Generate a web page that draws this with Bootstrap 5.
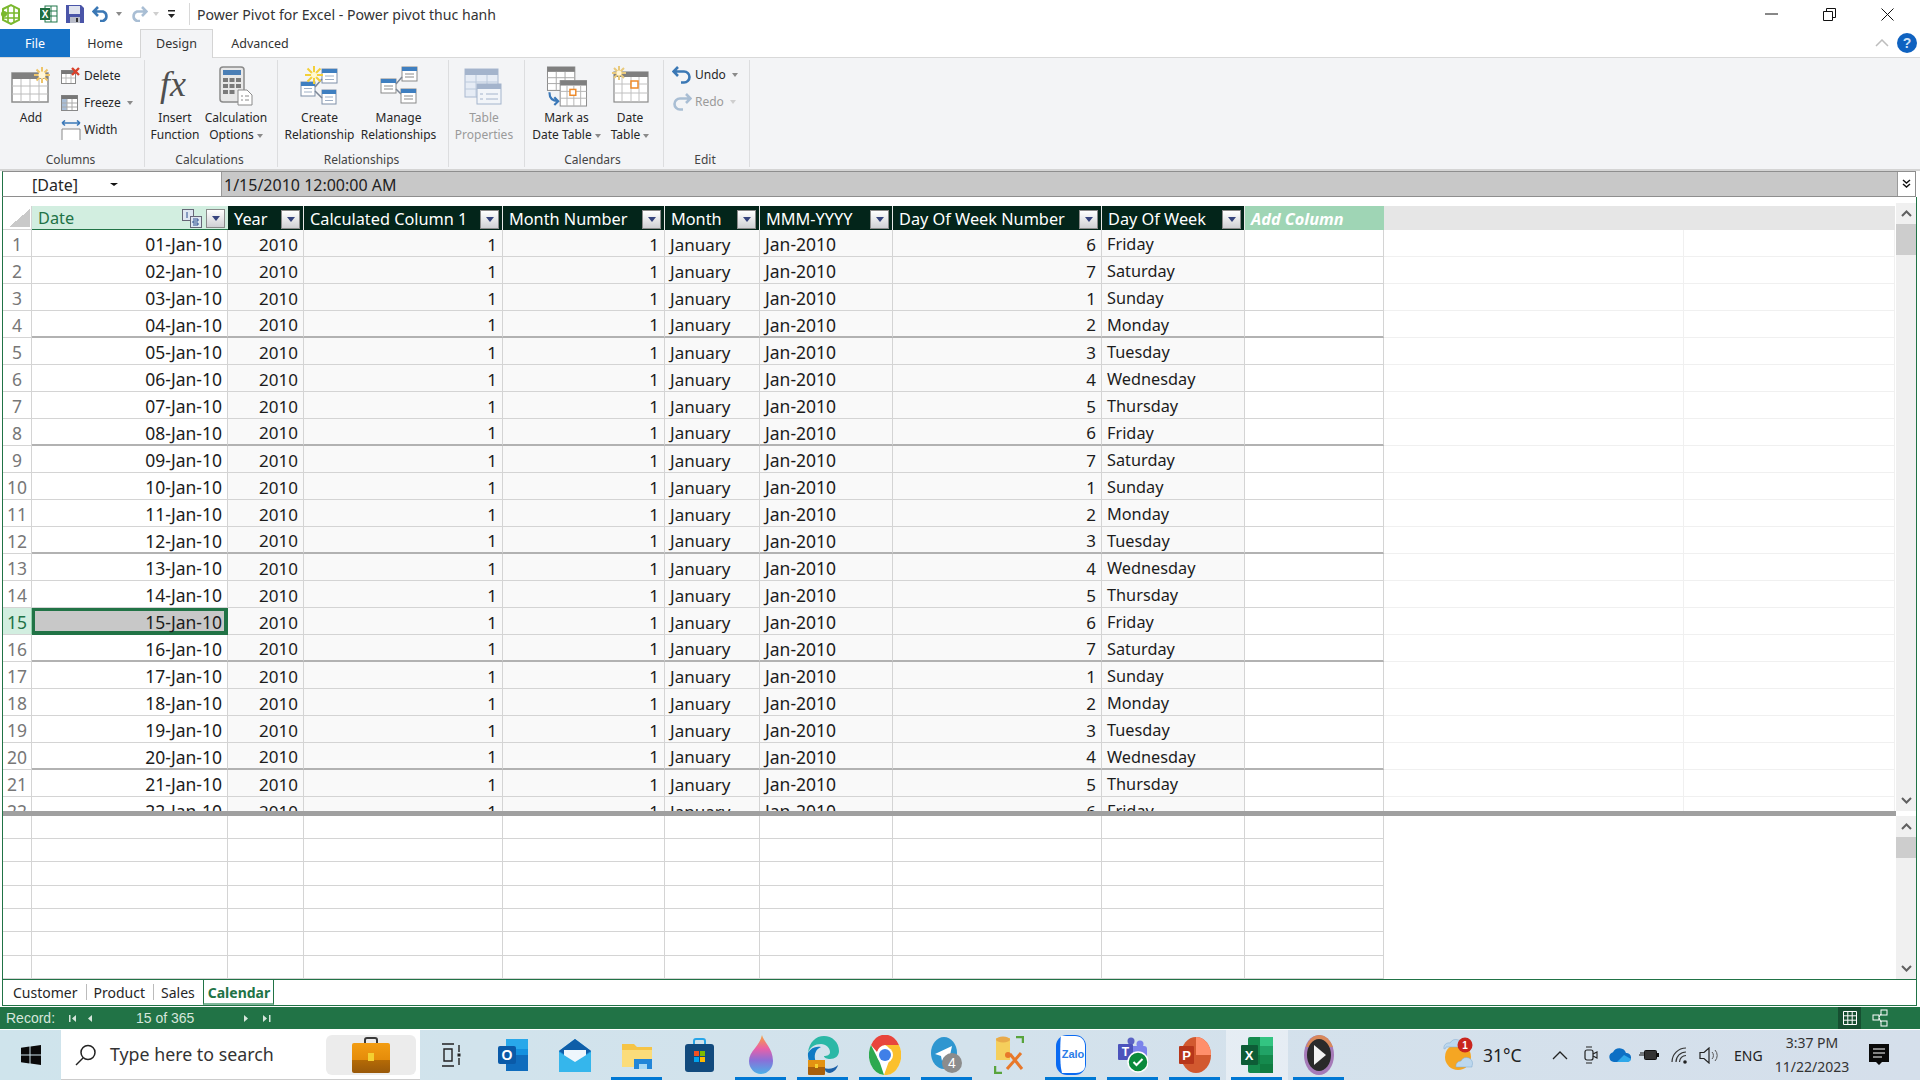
<!DOCTYPE html>
<html lang="en">
<head>
  <meta charset="UTF-8">
  <title>Power Pivot for Excel - Power pivot thuc hanh</title>
  <link href="https://cdn.jsdelivr.net/npm/bootstrap@5.3.3/dist/css/bootstrap.min.css" rel="stylesheet">
  <style>
    body { width: 1920px; height: 1080px; overflow: hidden; background: #fff; font-family: "Noto Sans", "Open Sans", sans-serif; font-size: 12px; color: #262626; }
    svg { display: block; flex: none; }

    /* title bar */
    .title-bar { height: 29px; }
    .title-bar .title { font-size: 14.1px; color: #333; border-left: 1px solid #d8d8d8; padding-left: 7px; padding-top: 2px; line-height: 20px; }
    .qat { width: 189px; padding-left: 0; }
    .win-btn { width: 58px; display: flex; justify-content: center; }

    /* tabs */
    .rb-tabs { height: 28px; border-bottom: 0; }
    .rb-tabs .nav-link { height: 28px; padding: 0; border: 1px solid transparent; border-bottom: 0; border-radius: 0; color: #333; font-size: 12.5px; line-height: 28px; text-align: center; }
    .rb-tabs .nav-link.file { width: 70px; background: #1572c8; color: #fff; }
    .rb-tabs .nav-link.home { width: 70px; }
    .rb-tabs .nav-link.active { width: 73px; background: #f3f4f6; border-color: #d4d4d4; position: relative; z-index: 1; height: 29px; }
    .rb-tabs .nav-link.adv { width: 94px; }

    /* ribbon */
    .ribbon { height: 115px; background: #f3f4f6; border-top: 1px solid #d9d9d9; border-bottom: 2px solid #d4d4d4; }
    .rb-group { border-right: 1px solid #dcdddf; margin-top: 2px; margin-bottom: 2px; height: 107px; }
    .rb-body { height: 90px; padding-top: 6px; }
    .rb-label { height: 17px; line-height: 19px; text-align: center; color: #444; padding-right: 3px; }
    .rb-btn { display: flex; flex-direction: column; align-items: center; line-height: 17px; text-align: center; white-space: nowrap; }
    .rb-btn .ic { height: 41px; display: flex; align-items: flex-start; justify-content: center; margin-bottom: 2px; }
    .rb-btn.off, .rb-small.off { color: #9a9a9a; }
    .rb-small { display: flex; align-items: center; height: 27px; gap: 3px; white-space: nowrap; }
    .car { display: inline-block; width: 0; height: 0; border: 3.5px solid transparent; border-top: 4px solid #8a8a8a; border-bottom: 0; vertical-align: middle; margin-left: 3px; }
    .car.off { border-top-color: #cfcfcf; }

    /* formula bar */
    .formula { height: 26px; margin-left: 2px; margin-right: 4px; border: 1px solid #8e8e8e; border-left-color: #217346; background: #c8c8c8; font-size: 16px; }
    .formula .name { width: 219px; height: 100%; background: #fff; border-right: 1px solid #9a9a9a; padding-left: 29px; padding-top: 1px; gap: 29px; }
    .formula .value { padding-left: 2px; padding-top: 1px; color: #222; }
    .formula .more { width: 18px; height: 100%; background: #fff; border-left: 1px solid #9a9a9a; }

    /* data panes */
    .panes { margin-left: 2px; margin-right: 3px; border-left: 1px solid #217346; border-right: 1px solid #217346; }
    .pane { overflow: hidden; }
    .pane-top { height: 614px; padding-top: 9px; }
    .pane-bottom { height: 163px; }
    .splitter { height: 5px; background: #a0a0a0; margin-right: 20px; }
    .vscroll { width: 20px; margin-left: 1px; background: #f0f0f0; display: flex; flex-direction: column; flex: none; }
    .pane-top .vscroll { margin-top: -3px; }
    .sb-arrow { height: 21px; display: flex; align-items: center; justify-content: center; flex: none; }
    .sb-thumb { background: #cdcdcd; flex: none; }

    .table.pp-grid { table-layout: fixed; width: 1892px; margin: 0; border-collapse: separate; border-spacing: 0; font-size: 17px; --bs-table-bg: transparent; }
    .table.pp-grid th, .table.pp-grid td { padding: 3px 5px 0; height: 27px; line-height: 23px; font-weight: 400; white-space: nowrap; overflow: hidden; border: 0; border-right: 1px solid #d4d4d4; border-bottom: 1px solid #d4d4d4; background-color: #f9f9f9; color: #1c1c1c; box-shadow: none; }
    .table.pp-grid td.wide { font-size: 17.5px; }
    .table.pp-grid td.day { font-size: 16.3px; }
    .table.pp-grid th { height: 24px; padding: 0 3px 0 6px; line-height: 21px; font-size: 16.3px; background-color: #03251a; color: #fff; border-right-color: #e8e8e8; border-bottom: 0; }
    .table.pp-grid th.corner { background: #fff linear-gradient(to bottom right, transparent 50%, #c9c9c9 50%) no-repeat 6px 3px / 21px 18px; border-right-color: #d4d4d4; border-bottom: 1px solid #d4d4d4; }
    .table.pp-grid th.cur { background-color: #d2eee0; color: #217346; border-bottom: 1px solid #217346; border-right: 0; }
    .table.pp-grid th.addcol { background-color: #9fd5b5; font-weight: 700; font-style: italic; border-right: 0; }
    .table.pp-grid th.fill { background-color: #e6e6e6; border-right-color: #e6e6e6; }
    .table.pp-grid td.rn { background-color: #fff; color: #777; text-align: center; padding-left: 0; padding-right: 0; font-size: 17.5px; }
    .table.pp-grid td.rn.sel { background-color: #d2eee0; color: #217346; border-right-color: #8fcfaa; }
    .table.pp-grid td.dt { background-color: #fff; text-align: right; font-size: 17.5px; }
    .table.pp-grid td.num { text-align: right; }
    .table.pp-grid td.blank { background-color: #fff; }
    .table.pp-grid td.fill { background-color: #fff; border-right-color: #f0f0f0; border-bottom-color: #f0f0f0; }
    .table.pp-grid td.hv { border-bottom: 2px solid #b2b2b2; line-height: 22px; }
    .table.pp-grid td.cursor { background-color: #c8c8c8; box-shadow: inset 0 0 0 3px #217346; border-color: #217346; }
    .table.pp-grid.low td { height: 23px; padding: 0; line-height: 21px; background-color: #fff; }
    .table.pp-grid.low tr:nth-child(3n) td { height: 24px; }
    .table.pp-grid.low td.none { border: 0; }
    .flt { width: 19px; height: 19px; border: 1px solid #8a8a8a; background: linear-gradient(#fff, #cfd0d4); display: flex; align-items: center; justify-content: center; flex: none; }
    .flt i { width: 0; height: 0; border: 4px solid transparent; border-top: 5px solid #36447e; border-bottom: 0; }

    /* sheet tabs */
    .sheets { height: 27px; margin-left: 2px; margin-right: 3px; border: 1px solid #217346; border-top: 0; border-bottom: 1px solid #217346; font-size: 14px; }
    .sheets .line { flex: 1; border-top: 1px solid #217346; height: 100%; }
    .sheets .nav-link { padding: 0 8px; height: 100%; line-height: 25px; border: 0; border-top: 1px solid #217346; color: #262626; border-radius: 0; position: relative; }
    .sheets .nav-link + .nav-link::before { content: ""; position: absolute; left: 0; top: 4px; height: 16px; border-left: 1px solid #bbb; }
    .sheets .nav-link.active { color: #217346; font-weight: 700; border: 1px solid #217346; border-bottom: 2px solid #7fb89a; padding: 0 4px; width: 71px; text-align: center; }
    .sheets .nav-link.active::before { display: none; }
    .sheets .lead { width: 2px; height: 100%; border-top: 1px solid #217346; }

    /* status bar */
    .status { height: 22px; margin-top: 1px; background: #217346; color: #d6e6dc; font-size: 14px; padding-left: 6px; font-family: "Liberation Sans", sans-serif; }
    .status .gv { width: 23px; height: 22px; background: #164f31; }

    /* taskbar */
    .taskbar { height: 51px; background: linear-gradient(90deg, #cfe4ec, #d3e2ec 50%, #d5dfeb); border-top: 1px solid #fff; }
    .start { width: 61px; }
    .search { width: 359px; height: 100%; background: #fff; border-bottom: 1px solid #ccc; padding-left: 14px; font-size: 17.8px; color: #333; }
    .search .brief { width: 90px; height: 40px; margin-left: auto; margin-right: 4px; border-radius: 6px; background: #ececec; }
    .tb-item { width: 62px; height: 100%; display: flex; align-items: center; justify-content: center; position: relative; }
    .tb-item.on::after { content: ""; position: absolute; left: 5px; right: 6px; bottom: 0; height: 3px; background: #0078d4; }
    .tb-item.cur { background: rgba(255,255,255,.42); }
    .tray { margin-left: auto; width: 480px; color: #222; }
    .clock { font-size: 14px; line-height: 24px; text-align: center; width: 110px; color: #333; }
  </style>
</head>
<body class="d-flex flex-column">

<!-- title bar -->
<div class="title-bar d-flex align-items-center">
  <div class="qat d-flex align-items-center">
    <svg width="22" height="22" viewBox="0 0 22 22" class="me-3"><path d="M3 6l8-4 8 4v11l-8 4-8-4z" fill="#fff" stroke="#7ab82e" stroke-width="2"/><path d="M8 4v16M14 4v16M3 10h16M3 15h16" stroke="#7ab82e" stroke-width="1.6"/><circle cx="4" cy="11" r="3" fill="#7ab82e"/></svg>
    <svg width="18" height="18" viewBox="0 0 18 18" style="margin-left:2px"><rect x="5" y="1" width="12" height="16" fill="#fff" stroke="#21764a"/><path d="M11 1v16M5 6h12M5 11h12" stroke="#21764a"/><rect y="3" width="10" height="12" fill="#1e6d40"/><text x="5" y="13" font-size="10" font-weight="700" text-anchor="middle" fill="#fff" font-family="Liberation Sans">X</text></svg>
    <svg width="18" height="18" viewBox="0 0 18 18" class="ms-2"><path d="M0 0h15l3 3v15H0z" fill="#4a55a8"/><rect x="3" y="1" width="11" height="8" fill="#dfe3ee"/><rect x="4" y="12" width="10" height="6" fill="#b8bcc8"/><rect x="10" y="13" width="2" height="4" fill="#333"/></svg>
    <svg width="19" height="16" viewBox="0 0 19 16" class="ms-2"><path d="M6 1L1.500 5.500 6 10M2 5.500h9a5 5 0 0 1 0 9.500H8" fill="none" stroke="#3b78b5" stroke-width="2.600"/></svg>
    <i class="car" style="margin-left:5px"></i>
    <svg width="19" height="16" viewBox="0 0 19 16" style="margin-left:7px"><path d="M13 1l4.500 4.500L13 10M17 5.500H8a5 5 0 0 0 0 9.500h3" fill="none" stroke="#a9bed4" stroke-width="2.600"/></svg>
    <i class="car off" style="margin-left:5px"></i>
    <svg width="7" height="9" viewBox="0 0 7 9" style="margin-left:9px"><path d="M0 0h7v1.500H0zM0 4h7L3.500 8z" fill="#222"/></svg>
  </div>
  <div class="title">Power Pivot for Excel - Power pivot thuc hanh</div>
  <div class="ms-auto d-flex align-items-center" style="padding-right:4px">
    <div class="win-btn"><svg width="13" height="2" viewBox="0 0 13 2"><path d="M0 1h13" stroke="#111" stroke-width="1"/></svg></div>
    <div class="win-btn"><svg width="13" height="13" viewBox="0 0 13 13"><path d="M.5 3.500h9v9h-9zM3.500 3V.5h9v9H10" fill="none" stroke="#111"/></svg></div>
    <div class="win-btn"><svg width="13" height="13" viewBox="0 0 13 13"><path d="M.5.500l12 12M12.500.500l-12 12" stroke="#111"/></svg></div>
  </div>
</div>

<!-- ribbon tabs -->
<div class="d-flex align-items-center">
  <ul class="nav rb-tabs flex-grow-1">
    <li class="nav-item"><a class="nav-link file" href="#">File</a></li>
    <li class="nav-item"><a class="nav-link home" href="#">Home</a></li>
    <li class="nav-item"><a class="nav-link active" href="#">Design</a></li>
    <li class="nav-item"><a class="nav-link adv" href="#">Advanced</a></li>
  </ul>
  <svg width="14" height="8" viewBox="0 0 14 8" class="me-2"><path d="M1 7l6-6 6 6" fill="none" stroke="#bdbdbd" stroke-width="1.500"/></svg>
  <svg width="20" height="20" viewBox="0 0 20 20" style="margin-right:3px"><circle cx="10" cy="10" r="10" fill="#0f62c0"/><text x="10" y="15" font-size="14" font-weight="700" text-anchor="middle" fill="#cfe2f8" font-family="Liberation Sans">?</text></svg>
</div>

<!-- ribbon -->
<div class="ribbon d-flex">
  <div class="rb-group" style="width:145px">
    <div class="rb-body d-flex">
      <div class="rb-btn" style="width:62px">
        <div class="ic"><svg width="40" height="40" viewBox="0 0 40 40"><rect x="1" y="7" width="36" height="29" fill="#fff" stroke="#8c8c8c" stroke-width="1.500"/><rect x="1" y="7" width="36" height="6" fill="#808080"/><path d="M10 13v23M19 13v23M28 13v23M1 20h36M1 28h36" stroke="#bcbcbc"/><g stroke="#eec468" stroke-width="2"><path d="M31 1v16M23 9h16M25.500 3.500l11 11M36.500 3.500l-11 11"/></g><circle cx="31" cy="9" r="3.500" fill="#fff6d8"/></svg></div>
        <span>Add</span>
      </div>
      <div style="margin-top:-3px;margin-left:-1px">
        <div class="rb-small"><svg width="20" height="18" viewBox="0 0 20 18"><rect x=".5" y="3.500" width="14" height="13" fill="#fff" stroke="#888"/><rect x=".5" y="3.500" width="14" height="3.500" fill="#777"/><path d="M5 7v9M10 7v9M1 11h13" stroke="#bbb"/><path d="M11 1l7 7M18 1l-7 7" stroke="#d8402a" stroke-width="2.400"/></svg>Delete</div>
        <div class="rb-small"><svg width="20" height="18" viewBox="0 0 20 18"><rect x=".5" y="1.500" width="16" height="15" fill="#fff" stroke="#888"/><rect x=".5" y="1.500" width="16" height="3.500" fill="#777"/><rect x="1" y="5" width="5" height="11" fill="#a8bdd6"/><path d="M6 5v11M11 5v11M1 9h15M1 13h15" stroke="#aaa"/></svg>Freeze<i class="car"></i></div>
        <div class="rb-small"><svg width="20" height="20" viewBox="0 0 20 20"><path d="M1 3h18M1 3l3-2.500M1 3l3 2.500M19 3l-3-2.500M19 3l-3 2.500" stroke="#3a78b8" stroke-width="1.600" fill="none"/><path d="M1 20V9h18v11" fill="#fff" stroke="#8a8a8a"/></svg>Width</div>
      </div>
    </div>
    <div class="rb-label">Columns</div>
  </div>

  <div class="rb-group" style="width:133px">
    <div class="rb-body d-flex">
      <div class="rb-btn" style="width:60px">
        <div class="ic"><svg width="36" height="41" viewBox="0 0 36 41"><text x="3" y="30" font-family="Liberation Serif" font-style="italic" font-size="36" fill="#4f4f4f">fx</text></svg></div>
        <span>Insert<br>Function</span>
      </div>
      <div class="rb-btn" style="width:62px">
        <div class="ic"><svg width="34" height="40" viewBox="0 0 34 40"><rect x="1" y="1" width="24" height="35" rx="3" fill="#e8e8e8" stroke="#8a8a8a" stroke-width="1.500"/><rect x="4" y="4" width="18" height="5" fill="#4a7eb5"/><g fill="#7a7a7a"><rect x="4" y="12" width="5" height="4"/><rect x="10.500" y="12" width="5" height="4"/><rect x="17" y="12" width="5" height="4"/><rect x="4" y="18" width="5" height="4"/><rect x="10.500" y="18" width="5" height="4"/><rect x="17" y="18" width="5" height="4"/><rect x="4" y="24" width="5" height="4"/><rect x="10.500" y="24" width="5" height="4"/></g><path d="M19 24h9l5 5v10H19z" fill="#fff" stroke="#8a8a8a"/><path d="M22 30h2M26 30h4M22 34h2M26 34h4" stroke="#8a8a8a"/></svg></div>
        <span>Calculation<br>Options<i class="car"></i></span>
      </div>
    </div>
    <div class="rb-label">Calculations</div>
  </div>

  <div class="rb-group" style="width:171px">
    <div class="rb-body d-flex">
      <div class="rb-btn" style="width:83px">
        <div class="ic"><svg width="40" height="40" viewBox="0 0 40 40"><g fill="#fff" stroke="#7f8fa8"><rect x="1" y="16" width="14" height="14"/><rect x="22" y="3" width="15" height="14"/><rect x="22" y="24" width="14" height="14"/></g><g fill="#3f7fc0"><rect x="1" y="16" width="14" height="4"/><rect x="22" y="3" width="15" height="4"/><rect x="22" y="24" width="14" height="4"/></g><path d="M15 21l7-8M15 25l7 7" stroke="#7c8797" stroke-width="1.500"/><path d="M4 22.500h8M4 26h8M25 10h9M25 13.500h9M25 31h8M25 34.500h8" stroke="#9fb0c6"/><g stroke="#f3cf38" stroke-width="2"><path d="M14 0v18M5 9h18M7.500 2.500l13 13M20.500 2.500l-13 13"/></g><circle cx="14" cy="9" r="3" fill="#fff8cc"/></svg></div>
        <span>Create<br>Relationship</span>
      </div>
      <div class="rb-btn" style="width:75px">
        <div class="ic"><svg width="38" height="40" viewBox="0 0 38 40"><g fill="#fff" stroke="#8a8a8a"><rect x="1" y="13" width="15" height="14"/><rect x="22" y="1" width="15" height="14"/><rect x="21" y="23" width="15" height="14"/></g><g fill="#3f7fc0"><rect x="1" y="13" width="15" height="4"/><rect x="22" y="1" width="15" height="4"/><rect x="21" y="23" width="15" height="4"/></g><path d="M16 18l6-7M16 23l5 5" stroke="#7c8797" stroke-width="1.500"/><path d="M4 20h9M4 23h9M25 8h9M25 11h9M24 30h9M24 33h9" stroke="#8a8a8a"/></svg></div>
        <span>Manage<br>Relationships</span>
      </div>
    </div>
    <div class="rb-label">Relationships</div>
  </div>

  <div class="rb-group" style="width:76px">
    <div class="rb-body d-flex">
      <div class="rb-btn off" style="width:70px">
        <div class="ic"><svg width="40" height="40" viewBox="0 0 40 40"><rect x="1" y="3" width="33" height="28" fill="#e6ecf5" stroke="#a9b8cf"/><rect x="1" y="3" width="33" height="6" fill="#a4b4cc"/><path d="M12 9v22M23 9v22M1 16h33M1 23h33" stroke="#bccadc"/><rect x="13" y="18" width="24" height="20" fill="#f2f5f9" stroke="#a4b4cc"/><rect x="13" y="18" width="24" height="5" fill="#a4b4cc"/><path d="M22 28h12M22 33h12M16 28h3M16 33h3" stroke="#a4b4cc"/></svg></div>
        <span>Table<br>Properties</span>
      </div>
    </div>
    <div class="rb-label">&nbsp;</div>
  </div>

  <div class="rb-group" style="width:139px">
    <div class="rb-body d-flex">
      <div class="rb-btn" style="width:83px">
        <div class="ic"><svg width="42" height="41" viewBox="0 0 42 42"><rect x="1" y="1" width="28" height="24" fill="#fff" stroke="#8a8a8a"/><rect x="1" y="1" width="28" height="5" fill="#7f7f7f"/><path d="M10 6v19M19 6v19M1 12h28M1 18h28" stroke="#aaa"/><rect x="14" y="15" width="27" height="26" fill="#fff" stroke="#8a8a8a"/><rect x="14" y="15" width="27" height="5" fill="#7f7f7f"/><path d="M21 20v21M28 20v21M35 20v21M14 26h27M14 33h27" stroke="#b5b5b5"/><rect x="24" y="24" width="6" height="6" fill="#fff" stroke="#ee8a2a" stroke-width="1.500"/><path d="M3 27c0 6 3 9 9 9M8 32l4 4-4 4" fill="none" stroke="#3a78b8" stroke-width="2.200"/></svg></div>
        <span>Mark as<br>Date Table<i class="car"></i></span>
      </div>
      <div class="rb-btn" style="width:44px">
        <div class="ic"><svg width="38" height="38" viewBox="0 0 38 38"><rect x="3" y="6" width="34" height="30" fill="#fff" stroke="#8a8a8a" stroke-width="1.200"/><rect x="3" y="6" width="34" height="5" fill="#7f7f7f"/><path d="M11 11v25M20 11v25M28 11v25M3 18h34M3 27h34" stroke="#c0c0c0"/><rect x="20" y="15" width="7" height="7" fill="#fff" stroke="#ee8a2a" stroke-width="1.500"/><g stroke="#e8c97c" stroke-width="2"><path d="M8 0v14M1 7h14M3 2l10 10M13 2L3 12"/></g><circle cx="8" cy="7" r="2.500" fill="#fff6d8"/></svg></div>
        <span>Date<br>Table<i class="car"></i></span>
      </div>
    </div>
    <div class="rb-label">Calendars</div>
  </div>

  <div class="rb-group" style="width:86px">
    <div class="rb-body" style="padding-left:8px;padding-top:2px">
      <div class="rb-small" style="height:27px"><svg width="20" height="18" viewBox="0 0 20 18"><path d="M6 1L1.500 5.500 6 10M2 5.500h10a5 5 0 0 1 0 11h-3" fill="none" stroke="#3b78b5" stroke-width="2.600"/></svg>Undo<i class="car"></i></div>
      <div class="rb-small off" style="height:27px"><svg width="20" height="18" viewBox="0 0 20 18"><path d="M14 1l4.500 4.500L14 10M18 5.500H8a5 5 0 0 0 0 11h3" fill="none" stroke="#a9bed4" stroke-width="2.600"/></svg>Redo<i class="car off"></i></div>
    </div>
    <div class="rb-label">Edit</div>
  </div>
</div>

<!-- formula bar -->
<div class="formula d-flex align-items-center">
  <div class="name d-flex align-items-center"><span>[Date]</span><i class="car" style="border-top-color:#111;border-width:3.500px 4px 0"></i></div>
  <div class="value flex-grow-1">1/15/2010 12:00:00 AM</div>
  <div class="more d-flex align-items-center justify-content-center"><svg width="9" height="10" viewBox="0 0 9 10"><path d="M1 1l3.500 3L8 1M1 5l3.500 3L8 5" fill="none" stroke="#111" stroke-width="1.500"/></svg></div>
</div>

<!-- data panes -->
<div class="panes">
  <div class="pane pane-top d-flex">
    <div class="flex-grow-1 overflow-hidden">
      <table class="table pp-grid" id="top-grid">
        <colgroup><col style="width:29px"><col style="width:196px"><col style="width:76px"><col style="width:199px"><col style="width:162px"><col style="width:95px"><col style="width:133px"><col style="width:209px"><col style="width:143px"><col style="width:139px"><col style="width:300px"><col style="width:211px"></colgroup>
        <thead id="top-head"></thead>
        <tbody id="top-rows"></tbody>
      </table>
    </div>
    <div class="vscroll">
      <div class="sb-arrow"><svg width="11" height="7" viewBox="0 0 11 7"><path d="M1 6l4.500-4.500L10 6" fill="none" stroke="#606060" stroke-width="2"/></svg></div>
      <div class="sb-thumb" style="height:31px"></div>
      <div class="flex-grow-1"></div>
      <div class="sb-arrow"><svg width="11" height="7" viewBox="0 0 11 7"><path d="M1 1l4.500 4.500L10 1" fill="none" stroke="#606060" stroke-width="2"/></svg></div>
    </div>
  </div>
  <div class="splitter"></div>
  <div class="pane pane-bottom d-flex">
    <div class="flex-grow-1 overflow-hidden">
      <table class="table pp-grid low">
        <colgroup><col style="width:29px"><col style="width:196px"><col style="width:76px"><col style="width:199px"><col style="width:162px"><col style="width:95px"><col style="width:133px"><col style="width:209px"><col style="width:143px"><col style="width:139px"><col style="width:300px"><col style="width:211px"></colgroup>
        <tbody id="low-rows"></tbody>
      </table>
    </div>
    <div class="vscroll">
      <div class="sb-arrow"><svg width="11" height="7" viewBox="0 0 11 7"><path d="M1 6l4.500-4.500L10 6" fill="none" stroke="#606060" stroke-width="2"/></svg></div>
      <div class="sb-thumb" style="height:21px"></div>
      <div class="flex-grow-1"></div>
      <div class="sb-arrow"><svg width="11" height="7" viewBox="0 0 11 7"><path d="M1 1l4.500 4.500L10 1" fill="none" stroke="#606060" stroke-width="2"/></svg></div>
    </div>
  </div>
</div>

<!-- sheet tabs -->
<ul class="sheets nav flex-nowrap">
  <li class="lead"></li>
  <li class="nav-item d-flex"><a class="nav-link" href="#">Customer</a><a class="nav-link" href="#">Product</a><a class="nav-link" href="#">Sales</a><a class="nav-link active" href="#">Calendar</a></li>
  <li class="line"></li>
</ul>

<!-- status bar -->
<div class="status d-flex align-items-center">
  <span style="width:63px">Record:</span>
  <svg width="8" height="7" viewBox="0 0 8 7"><path d="M0 0h1.500v7H0zM7 0v7L3 3.500z" fill="#d6e6dc"/></svg>
  <svg width="5" height="7" viewBox="0 0 5 7" style="margin-left:11px"><path d="M4 0v7L0 3.500z" fill="#d6e6dc"/></svg>
  <span style="width:108px;margin-left:43px">15 of 365</span>
  <svg width="5" height="7" viewBox="0 0 5 7" style="margin-left:0"><path d="M0 0v7l4-3.500z" fill="#d6e6dc"/></svg>
  <svg width="8" height="7" viewBox="0 0 8 7" style="margin-left:14px"><path d="M0 0v7l4-3.500zM6 0h1.500v7H6z" fill="#d6e6dc"/></svg>
  <div class="ms-auto gv d-flex align-items-center justify-content-center"><svg width="14" height="14" viewBox="0 0 14 14"><path d="M.5.500h13v13H.5zM.5 4.800h13M.5 9.200h13M4.800.500v13M9.200.500v13" fill="none" stroke="#fff"/></svg></div>
  <div class="d-flex align-items-center justify-content-center" style="width:38px;margin-right:21px"><svg width="16" height="18" viewBox="0 0 16 18"><g fill="none" stroke="#fff"><rect x="1" y="6" width="6" height="5"/><rect x="9" y="1" width="6" height="5"/><rect x="9" y="12" width="6" height="5"/></g><path d="M7 8l2-3M7 9l2 4" stroke="#fff"/></svg></div>
</div>

<!-- windows taskbar -->
<div class="taskbar d-flex align-items-center">
  <div class="start d-flex align-items-center justify-content-center"><svg width="20" height="20" viewBox="0 0 20 20"><path d="M0 2.800l8.500-1.200v8H0zM9.500 1.400L20 0v9.600H9.500zM0 10.500h8.500v8L0 17.300zM9.500 10.500H20V20L9.500 18.600z" fill="#0a0a0a"/></svg></div>
  <div class="search d-flex align-items-center">
    <svg width="22" height="22" viewBox="0 0 22 22"><circle cx="13" cy="8.500" r="7" fill="none" stroke="#222" stroke-width="1.500"/><path d="M8 14l-7 7" stroke="#222" stroke-width="1.500"/></svg>
    <span style="margin-left:13px">Type here to search</span>
    <div class="brief d-flex align-items-center justify-content-center"><svg width="38" height="36" viewBox="0 0 38 36"><defs><linearGradient id="bc" x1="0" y1="0" x2="0" y2="1"><stop offset="0" stop-color="#f39d12"/><stop offset=".55" stop-color="#e58c0a"/><stop offset=".56" stop-color="#b56b06"/><stop offset="1" stop-color="#99590a"/></linearGradient></defs><path d="M13 7V3a2 2 0 0 1 2-2h8a2 2 0 0 1 2 2v4" fill="none" stroke="#3a3a3a" stroke-width="2"/><rect y="6" width="38" height="30" rx="2" fill="url(#bc)"/><rect x="16" y="16" width="6" height="8" fill="#f4cf30"/></svg></div>
  </div>
  <div class="tb-item"><svg width="20" height="24" viewBox="0 0 20 24"><path d="M1 1h12M1 23h12M3 6h8v12H3zM18 2v7M18 15v7" fill="none" stroke="#222" stroke-width="1.400"/><rect x="16.500" y="10.500" width="3" height="3" fill="#222"/></svg></div>
  <div class="tb-item"><svg width="30" height="34" viewBox="0 0 30 34"><rect x="8" y="1" width="22" height="32" rx="2" fill="#1490df"/><path d="M8 1h22v10H8z" fill="#28a8ea"/><path d="M8 17h22v16H8z" fill="#0f6cbd"/><rect y="8" width="18" height="18" rx="2" fill="#0a5aa8"/><text x="9" y="22" font-size="14" font-weight="700" text-anchor="middle" fill="#fff" font-family="Liberation Sans">O</text></svg></div>
  <div class="tb-item"><svg width="32" height="34" viewBox="0 0 32 34"><path d="M0 13L16 1l16 12v19a2 2 0 0 1-2 2H2a2 2 0 0 1-2-2z" fill="#1f8fd9"/><path d="M0 13L16 1l16 12-16 10z" fill="#0f5ea8"/><path d="M5 12h22v6l-11 7-11-7z" fill="#eef6fc"/><path d="M0 14l16 10 16-10v20H0z" fill="#35b6ec"/></svg></div>
  <div class="tb-item on"><svg width="30" height="28" viewBox="0 0 30 28"><path d="M0 3h12l3 3h15v20H0z" fill="#f6c445"/><path d="M0 9h30v17H0z" fill="#fbdc7a"/><path d="M12 28V18h18v10z" fill="#2386d8"/><path d="M17 28v-5h8v5z" fill="#a8d8f4"/></svg></div>
  <div class="tb-item"><svg width="29" height="34" viewBox="0 0 29 34"><path d="M9 6V3a2 2 0 0 1 2-2h7a2 2 0 0 1 2 2v3" fill="none" stroke="#27a5e8" stroke-width="2"/><rect y="6" width="29" height="28" rx="3" fill="#124a7d"/><rect x="9" y="13" width="5" height="5" fill="#f25022"/><rect x="15" y="13" width="5" height="5" fill="#7fba00"/><rect x="9" y="19" width="5" height="5" fill="#00a4ef"/><rect x="15" y="19" width="5" height="5" fill="#ffb900"/></svg></div>
  <div class="tb-item on"><svg width="24" height="40" viewBox="0 0 24 40"><defs><linearGradient id="pa" x1="0" y1="0" x2="0" y2="1"><stop offset="0" stop-color="#f7a43a"/><stop offset=".35" stop-color="#e860a8"/><stop offset=".65" stop-color="#8a70d8"/><stop offset="1" stop-color="#4ab0e8"/></linearGradient></defs><path d="M13 0c1 6 11 13 11 26a12 13 0 0 1-24 0C0 16 11 11 13 0z" fill="url(#pa)"/></svg></div>
  <div class="tb-item on"><svg width="32" height="40" viewBox="0 0 32 40"><path d="M1 18C2 7 9 1 17 1c8 0 15 6 15 15 0 5-4 8-9 8-3 0-6-1-6-3 3 0 6-1 6-4 0-4-4-8-9-8C8 9 3 12 1 18z" fill="#2bb8a6"/><path d="M1 18c3-5 7-7 13-6-5 2-7 7-6 12 1 6 5 11 11 13C9 38 0 29 1 18z" fill="#0e7ac4"/><path d="M23 38c4-1 7-4 8-8-3 3-9 5-14 3 1 3 3 5 6 5z" fill="#1b60a8"/><rect x="1" y="25" width="17" height="15" rx="1" fill="#a85f0c"/><rect x="1" y="25" width="17" height="7" fill="#e39212"/><rect x="8" y="29" width="3" height="4" fill="#f4cf30"/></svg></div>
  <div class="tb-item on"><svg width="32" height="40" viewBox="-16 -20 32 40"><ellipse rx="16" ry="20" fill="#fff"/><path d="M-14 -10A16 20 0 0 1 14 -10H0A10 10 0 0 0 -8 -3z" fill="#e8453c"/><path d="M-14 -10L-5 8 -1 20A16 20 0 0 1 -14 -10z" fill="#2da94f"/><path d="M14 -10H0C6 -8 7 2 4 6L-1 20A16 20 0 0 0 14 -10z" fill="#fbc02d"/><circle r="8" fill="#fff"/><circle r="6" fill="#3f7fe8"/></svg></div>
  <div class="tb-item on"><svg width="32" height="38" viewBox="0 0 32 38"><ellipse cx="13" cy="17" rx="13" ry="16" fill="#2e96d0"/><path d="M4 18l17-8-3 14-5-3-2 4-1-5z" fill="#fff"/><circle cx="21" cy="27" r="10" fill="#8c8c8c"/><text x="21" y="32" font-size="14" text-anchor="middle" fill="#fff" font-family="Liberation Sans">4</text></svg></div>
  <div class="tb-item"><svg width="30" height="38" viewBox="0 0 30 38"><rect x="2" y="2" width="14" height="22" fill="#f5cf5c"/><ellipse cx="9" cy="3.500" rx="7" ry="3" fill="#e8aa4a"/><path d="M22 1h7v6M1 30v7h7" fill="none" stroke="#58a43c" stroke-width="2.500"/><path d="M13 33l14-16M16 18l12 15" stroke="#e8782a" stroke-width="3"/><circle cx="14" cy="19" r="3" fill="#e8782a"/></svg></div>
  <div class="tb-item on"><svg width="30" height="40" viewBox="0 0 30 40"><rect width="30" height="40" rx="11" fill="#0a6af2"/><path d="M5 1h14c6 0 10 4 10 10v20c0 4-4 7-9 7H6l-1-5c-1-6-1-28 0-32z" fill="#fff"/><text x="17" y="23" font-size="11" font-weight="700" text-anchor="middle" fill="#2a7ce8" font-family="Liberation Sans">Zalo</text></svg></div>
  <div class="tb-item on"><svg width="30" height="36" viewBox="0 0 30 36"><circle cx="22" cy="7" r="3.500" fill="#7b83eb"/><circle cx="13" cy="4" r="3.500" fill="#5b63c4"/><rect x="11" y="9" width="18" height="18" rx="3" fill="#7b83eb"/><rect y="7" width="15" height="16" rx="1" fill="#4b53bc"/><text x="7.500" y="19" font-size="12" font-weight="700" text-anchor="middle" fill="#fff" font-family="Liberation Sans">T</text><circle cx="20" cy="25" r="10" fill="#0a8a3c" stroke="#fff" stroke-width="1.500"/><path d="M15.500 25l3 3 6-6" fill="none" stroke="#fff" stroke-width="2"/></svg></div>
  <div class="tb-item on"><svg width="32" height="36" viewBox="0 0 32 36"><ellipse cx="17" cy="18" rx="15" ry="18" fill="#d2592f"/><path d="M17 0a15 18 0 0 1 15 18H17z" fill="#ff8f6b"/><rect y="9" width="15" height="18" rx="1" fill="#b7361a"/><text x="7.500" y="23" font-size="13" font-weight="700" text-anchor="middle" fill="#fff" font-family="Liberation Sans">P</text></svg></div>
  <div class="tb-item on cur"><svg width="32" height="36" viewBox="0 0 32 36"><rect x="7" width="25" height="36" rx="2" fill="#158a4d"/><rect x="19" width="13" height="9" fill="#33c481"/><rect x="19" y="9" width="13" height="9" fill="#21a366"/><rect x="7" y="18" width="12" height="9" fill="#107c41"/><rect x="19" y="27" width="13" height="9" fill="#107c41"/><rect y="8" width="17" height="20" rx="1" fill="#0d5c36"/><text x="8" y="23" font-size="13" font-weight="700" text-anchor="middle" fill="#fff" font-family="Liberation Sans">X</text></svg></div>
  <div class="tb-item on"><svg width="30" height="40" viewBox="0 0 30 40"><ellipse cx="15" cy="20" rx="15" ry="20" fill="#a57ab8"/><path d="M15 0a15 20 0 0 1 14 12L2 12A15 20 0 0 1 15 0z" fill="#d8885a"/><ellipse cx="15" cy="20" rx="12" ry="16" fill="#2a2a2a"/><path d="M10 10l12 10-12 10z" fill="#f2f2f2"/></svg></div>

  <div class="tray d-flex align-items-center">
    <svg width="30" height="36" viewBox="0 0 30 36" style="margin-left:3px"><circle cx="15" cy="20" r="13" fill="#f5a623"/><path d="M1 12a5 5 0 0 1 6-6 7 7 0 0 1 13 4H3a2 2 0 0 1-2 2z" fill="#bcd7ee" stroke="#7ea8cf" stroke-width=".5"/><path d="M13 30a5 5 0 0 1 5-6 6 6 0 0 1 11 5v1z" fill="#bcd7ee" stroke="#7ea8cf" stroke-width=".5"/><circle cx="22" cy="8" r="7.500" fill="#c9251e"/><text x="22" y="12" font-size="10" font-weight="700" text-anchor="middle" fill="#fff" font-family="Liberation Sans">1</text></svg>
    <span style="font-size:17.5px;margin-left:10px;width:40px;white-space:nowrap">31°C</span>
    <svg width="16" height="9" viewBox="0 0 16 9" style="margin-left:29px"><path d="M1 8l7-7 7 7" fill="none" stroke="#222" stroke-width="1.300"/></svg>
    <svg width="14" height="18" viewBox="0 0 14 18" style="margin-left:16px"><rect x="1" y="4" width="8" height="10" rx="2" fill="none" stroke="#222" stroke-width="1.200"/><path d="M9 8l4-2v6l-4-2M2 1h6M2 17h6" fill="none" stroke="#222" stroke-width="1.100"/></svg>
    <svg width="22" height="14" viewBox="0 0 22 14" style="margin-left:11px"><path d="M5 14a5 5 0 0 1-1-9.800A7 7 0 0 1 17 5a4.500 4.500 0 0 1 1 9z" fill="#0d6fc4"/><path d="M8 14l7-7 7 4c0 2-2 3-4 3z" fill="#2ea8ea"/></svg>
    <svg width="20" height="14" viewBox="0 0 20 14" style="margin-left:8px"><rect x="5.500" y="2.500" width="12" height="9" rx="1" fill="#333" stroke="#111"/><rect x="18" y="5" width="2" height="4" fill="#111"/><path d="M0 7h5M2 4v2M4 4v2" stroke="#111"/></svg>
    <svg width="18" height="17" viewBox="0 0 18 17" style="margin-left:12px"><path d="M1 15a14 14 0 0 1 14-14M5 15A10 10 0 0 1 15 5M8.500 15A6.500 6.500 0 0 1 15 8.500" fill="none" stroke="#333" stroke-width="1.200"/><circle cx="14" cy="15" r="1.800" fill="#222"/></svg>
    <svg width="20" height="17" viewBox="0 0 20 17" style="margin-left:10px"><path d="M1 5.500h4L10 1v15l-5-4.500H1z" fill="none" stroke="#222" stroke-width="1.200"/><path d="M13 5a5 5 0 0 1 0 7M16 3a8 8 0 0 1 0 11" fill="none" stroke="#555"/></svg>
    <span style="font-size:14px;margin-left:15px;width:30px">ENG</span>
    <div class="clock" style="margin-left:-7px"><div>3:37 PM</div><div>11/22/2023</div></div>
    <svg width="20" height="22" viewBox="0 0 20 22" style="margin-left:2px"><path d="M0 0h20v18h-7l-3 3-3-3H0z" fill="#0a0a0a"/><path d="M4 5h12M4 9h12M4 13h9" stroke="#fff"/></svg>
  </div>
</div>

<script>
  const cols = ['Year', 'Calculated Column 1', 'Month Number', 'Month', 'MMM-YYYY', 'Day Of Week Number', 'Day Of Week'];
  const flt = '<span class="flt"><i></i></span>';

  // header row
  let head = '<tr><th class="corner"></th><th class="cur"><div class="d-flex align-items-center">Date' +
    '<svg class="ms-auto me-1" width="20" height="19" viewBox="0 0 20 19"><rect x=".5" y=".5" width="11" height="11" fill="#dfe7f2" stroke="#667"/><rect x="8.500" y="7.500" width="11" height="11" fill="#dfe7f2" stroke="#667"/><path d="M5 3v6M11 10h5v2h-5v2h5v2h-5" stroke="#2d4f8e" fill="none"/></svg>' + flt + '</div></th>';
  cols.forEach(c => {
    head += `<th><div class="d-flex align-items-center justify-content-between"><span>${c}</span>${flt}</div></th>`;
  });
  head += '<th class="addcol">Add Column</th><th class="fill"></th><th class="fill"></th></tr>';
  document.getElementById('top-head').innerHTML = head;

  // 2010 calendar rows
  const names = ['Sunday', 'Monday', 'Tuesday', 'Wednesday', 'Thursday', 'Friday', 'Saturday'];
  let rows = '';
  for (let i = 1; i <= 22; i++) {
    const d = String(i).padStart(2, '0');
    const w = (i + 4) % 7;
    const hv = i % 4 === 0 ? ' hv' : '';
    rows += `<tr><td class="rn${i === 15 ? ' sel' : ''}">${i}</td>` +
      `<td class="dt${hv}${i === 15 ? ' cursor' : ''}">${d}-Jan-10</td>` +
      `<td class="num${hv}">2010</td><td class="num${hv}">1</td><td class="num${hv}">1</td>` +
      `<td class="${hv}">January</td><td class="wide${hv}">Jan-2010</td><td class="num${hv}">${w + 1}</td>` +
      `<td class="day${hv}">${names[w]}</td><td class="blank${hv}"></td><td class="fill"></td><td class="fill"></td></tr>`;
  }
  document.getElementById('top-rows').innerHTML = rows;

  // empty lower pane
  let low = '';
  for (let i = 0; i < 7; i++) {
    low += '<tr>' + '<td></td>'.repeat(10) + '<td class="none"></td><td class="none"></td></tr>';
  }
  document.getElementById('low-rows').innerHTML = low;
</script>
<script src="https://cdn.jsdelivr.net/npm/bootstrap@5.3.3/dist/js/bootstrap.bundle.min.js"></script>
</body>
</html>
